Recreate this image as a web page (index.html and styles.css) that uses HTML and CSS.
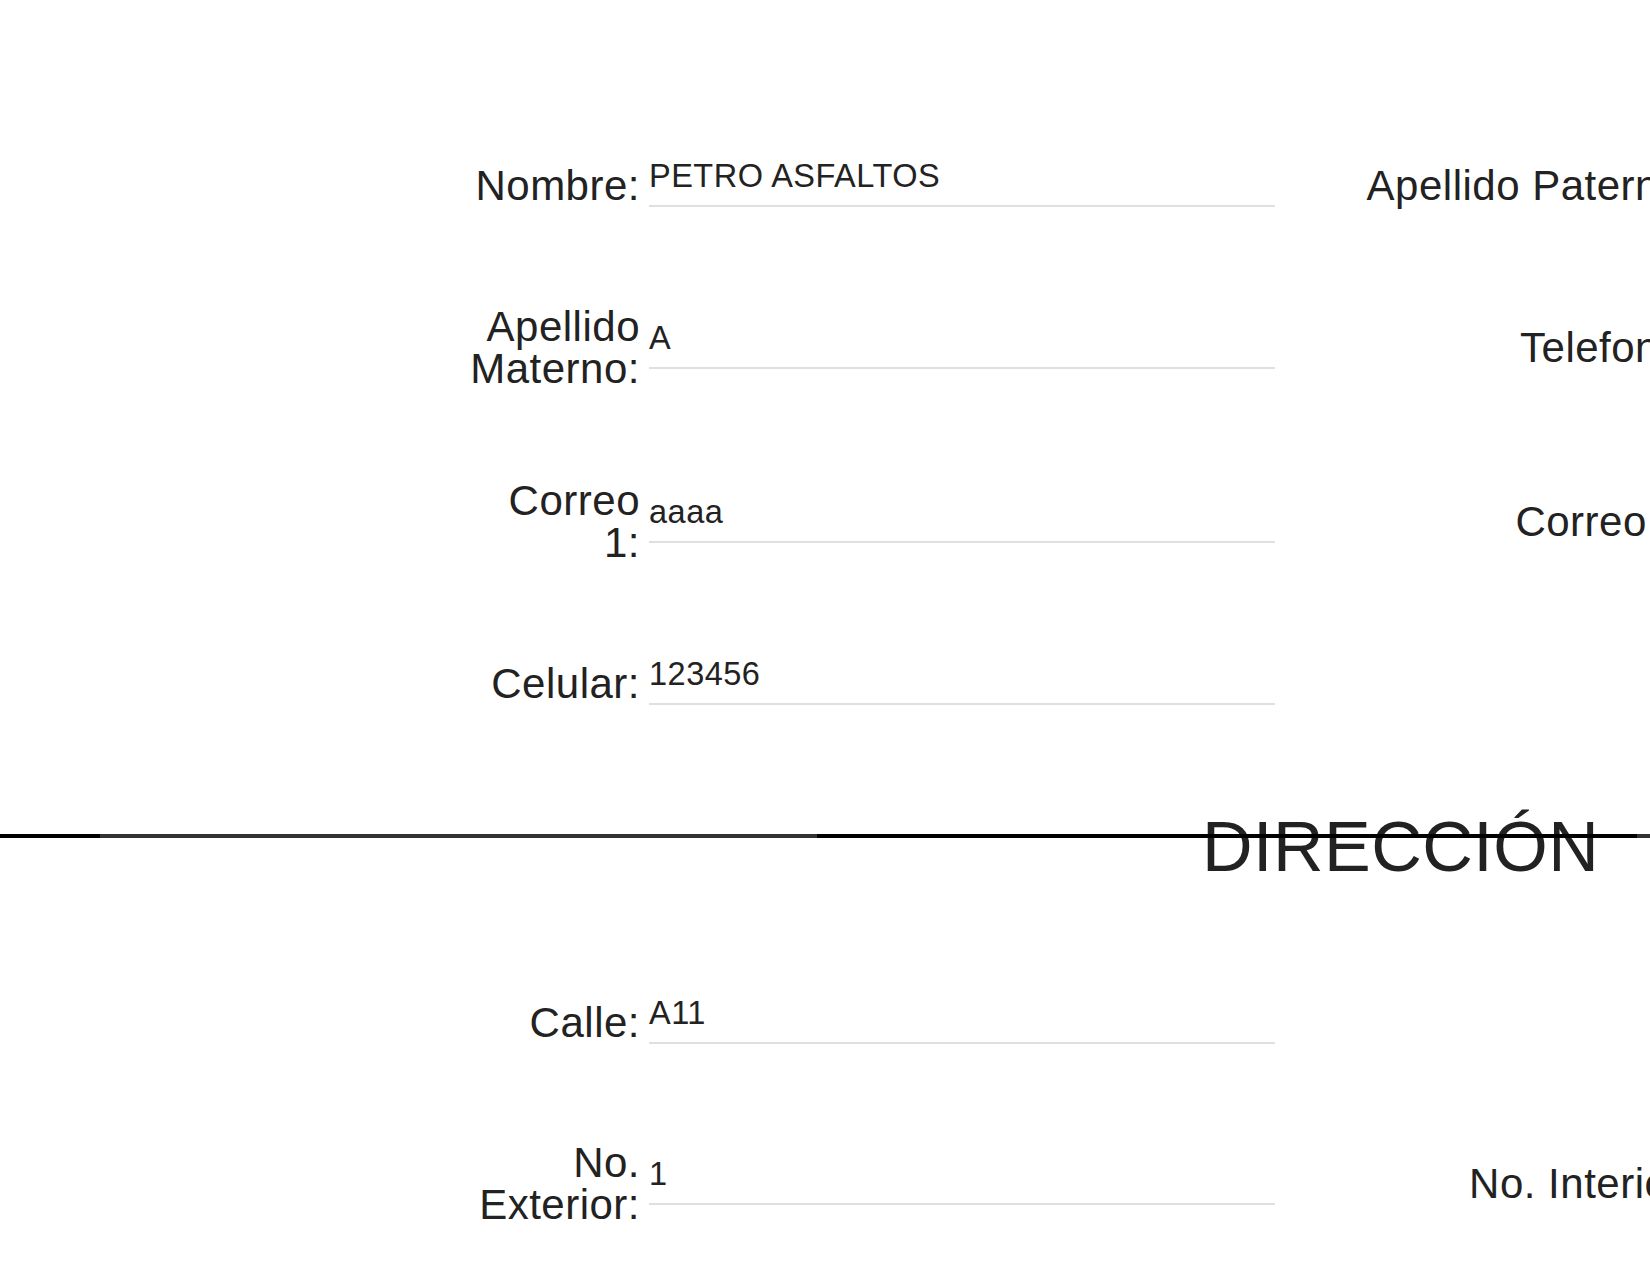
FILE: index.html
```html
<!DOCTYPE html>
<html lang="es">
<head>
<meta charset="utf-8">
<title>Datos</title>
<link rel="stylesheet" href="styles.css">
</head>
<body>
<main class="form">
  <section class="fields">
    <div class="row">
      <label class="label">Nombre:</label>
      <div class="field">PETRO ASFALTOS</div>
      <label class="label">Apellido Paterno:</label>
      <div class="field"></div>
    </div>
    <div class="row">
      <label class="label">Apellido Materno:</label>
      <div class="field">A</div>
      <label class="label">Telefono:</label>
      <div class="field"></div>
    </div>
    <div class="row">
      <label class="label">Correo 1:</label>
      <div class="field">aaaa</div>
      <label class="label">Correo 2:</label>
      <div class="field"></div>
    </div>
    <div class="row">
      <label class="label">Celular:</label>
      <div class="field">123456</div>
    </div>
  </section>

  <div class="section-head">
    <h2 class="section-title">DIRECCIÓN</h2>
  </div>

  <section class="fields fields-address">
    <div class="row">
      <label class="label">Calle:</label>
      <div class="field">A11</div>
    </div>
    <div class="row">
      <label class="label">No. Exterior:</label>
      <div class="field">1</div>
      <label class="label">No. Interior:</label>
      <div class="field"></div>
    </div>
  </section>
</main>
</body>
</html>
```

FILE: styles.css
```css
html, body {
  margin: 0;
  padding: 0;
  overflow: hidden;
  background: #fff;
}

body {
  font-family: "Liberation Sans", Arial, sans-serif;
  color: #222;
}

.form {
  width: 2400px;
  padding-top: 156px;
}

.fields {
  display: flex;
  flex-direction: column;
  gap: 90px;
  padding-left: 470px;
}

.fields-address {
  gap: 89px;
}

.row {
  display: grid;
  grid-template-columns: 170px 626px 411px 626px;
  column-gap: 9px;
  align-items: center;
  min-height: 60px;
}

.label {
  font-size: 42px;
  line-height: 42px;
  letter-spacing: 0.5px;
  text-align: right;
  color: #222;
}

.field {
  box-sizing: border-box;
  height: 42px;
  padding-top: 1px;
  border-bottom: 2px solid #e0e0e0;
  font-size: 32.5px;
  line-height: 20px;
  letter-spacing: 0.5px;
  color: #222;
  white-space: nowrap;
}

.section-head {
  position: relative;
  margin-top: 98px;
  margin-bottom: 111px;
  height: 70px;
}

.section-head::after {
  content: "";
  position: absolute;
  left: 0;
  right: 0;
  top: 22px;
  height: 4px;
  background: linear-gradient(to right,
    #000 0, #000 100px,
    #333 100px, #333 817px,
    #000 817px, #000 1637px,
    #333 1637px, #333 100%);
  z-index: 1;
}

.section-title {
  margin: 0;
  padding-left: 1202px;
  font-size: 70px;
  line-height: 70px;
  letter-spacing: 0.5px;
  font-weight: normal;
  color: #222;
}
```
